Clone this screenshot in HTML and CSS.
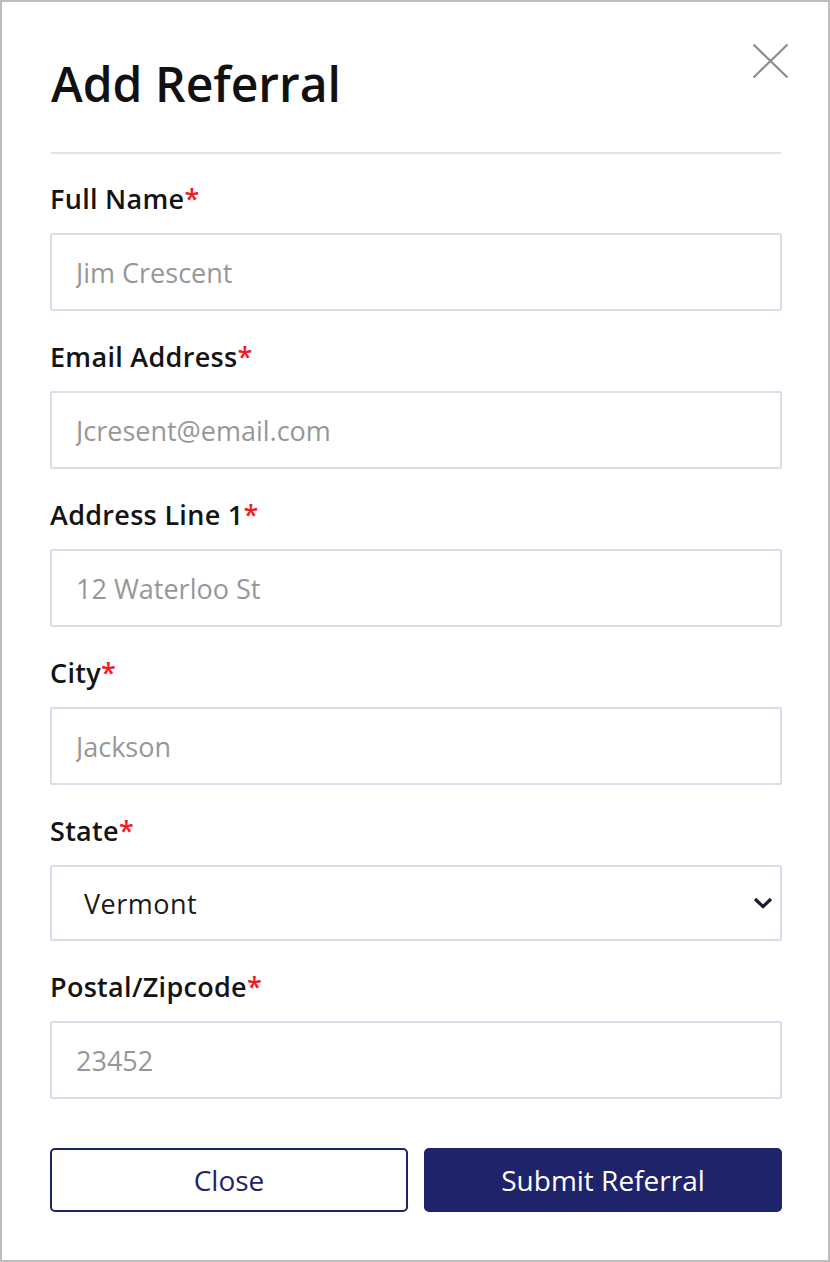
FILE: index.html
```html
<!DOCTYPE html>
<html lang="en">
<head>
<meta charset="utf-8">
<title>Add Referral</title>
<link rel="stylesheet" href="styles.css">
</head>
<body>
<div class="modal">
  <header class="modal-header">
    <h1 class="modal-title">Add Referral</h1>
  </header>
  <button class="close-x" type="button" aria-label="Close">
    <svg width="37" height="36" viewBox="0 0 37 36"><path d="M1.5 1.5 L35.5 34.5 M35.5 1.5 L1.5 34.5" stroke="#8c8c8c" stroke-width="2.2" fill="none"/></svg>
  </button>
  <form class="form">
    <div class="field">
      <label class="label">Full Name<span class="req">*</span></label>
      <input class="input" type="text" placeholder="Jim Crescent">
    </div>
    <div class="field">
      <label class="label">Email Address<span class="req">*</span></label>
      <input class="input" type="text" placeholder="Jcresent@email.com">
    </div>
    <div class="field">
      <label class="label">Address Line 1<span class="req">*</span></label>
      <input class="input" type="text" placeholder="12 Waterloo St">
    </div>
    <div class="field">
      <label class="label">City<span class="req">*</span></label>
      <input class="input" type="text" placeholder="Jackson">
    </div>
    <div class="field">
      <label class="label">State<span class="req">*</span></label>
      <div class="select-wrap">
        <select class="select">
          <option>Vermont</option>
        </select>
        <svg class="chevron" width="20" height="14" viewBox="0 0 20 14"><path d="M2 3 L10 10.5 L18 3" stroke="#1b1d2e" stroke-width="3.2" fill="none"/></svg>
      </div>
    </div>
    <div class="field">
      <label class="label">Postal/Zipcode<span class="req">*</span></label>
      <input class="input" type="text" placeholder="23452">
    </div>
    <div class="actions">
      <button class="btn btn-outline" type="button">Close</button>
      <button class="btn btn-primary" type="button">Submit Referral</button>
    </div>
  </form>
</div>
</body>
</html>
```

FILE: styles.css
```css
* { box-sizing: border-box; }

html, body {
  margin: 0;
  padding: 0;
  background: #ffffff;
}

body {
  font-family: "Open Sans", "Liberation Sans", sans-serif;
  color: #141414;
}

.modal {
  position: relative;
  width: 830px;
  height: 1262px;
  border: 2px solid #bdbdbd;
  padding: 53px 46px 0 48px;
  background: #fff;
}

.modal-header {
  margin: 0 1px 0 1px;
  padding-bottom: 39px;
  border-bottom: 2px solid #e3e3e3;
}

.modal-title {
  margin: 0;
  font-size: 48px;
  line-height: 58px;
  font-weight: 600;
  color: #111;
  letter-spacing: 0;
}

.close-x {
  position: absolute;
  top: 41px;
  right: 39px;
  width: 37px;
  height: 36px;
  padding: 0;
  border: 0;
  background: none;
  cursor: pointer;
  display: flex;
}

.form {
  display: flex;
  flex-direction: column;
  gap: 28px;
  padding-top: 27px;
}

.field {
  display: flex;
  flex-direction: column;
  gap: 16px;
}

.label {
  font-size: 27px;
  line-height: 36px;
  font-weight: 600;
  color: #141414;
  letter-spacing: 0.3px;
}

.req {
  color: #ee1c25;
}

.input,
.select {
  width: 100%;
  height: 78px;
  border: 2px solid #d9dfea;
  border-radius: 2px;
  background: #fff;
  font-family: "Open Sans", "Liberation Sans", sans-serif;
  font-size: 27px;
  padding: 0 24px;
  outline: none;
}

.input::placeholder {
  color: #979797;
  opacity: 1;
}

.select-wrap {
  position: relative;
}

.select {
  height: 76px;
  appearance: none;
  -webkit-appearance: none;
  color: #1a1a1a;
  padding: 0 32px;
  letter-spacing: 0.5px;
}

.chevron {
  position: absolute;
  right: 9px;
  top: 31px;
  pointer-events: none;
}

.actions {
  display: grid;
  grid-template-columns: 1fr 1fr;
  gap: 16px;
  margin-top: 21px;
}

.btn {
  height: 64px;
  border-radius: 5px;
  font-family: "Open Sans", "Liberation Sans", sans-serif;
  font-size: 28px;
  cursor: pointer;
}

.btn-outline {
  background: #fff;
  border: 2px solid #1f2367;
  color: #1f2367;
}

.btn-primary {
  background: #1f2369;
  border: 2px solid #1f2369;
  color: #fff;
}
```
